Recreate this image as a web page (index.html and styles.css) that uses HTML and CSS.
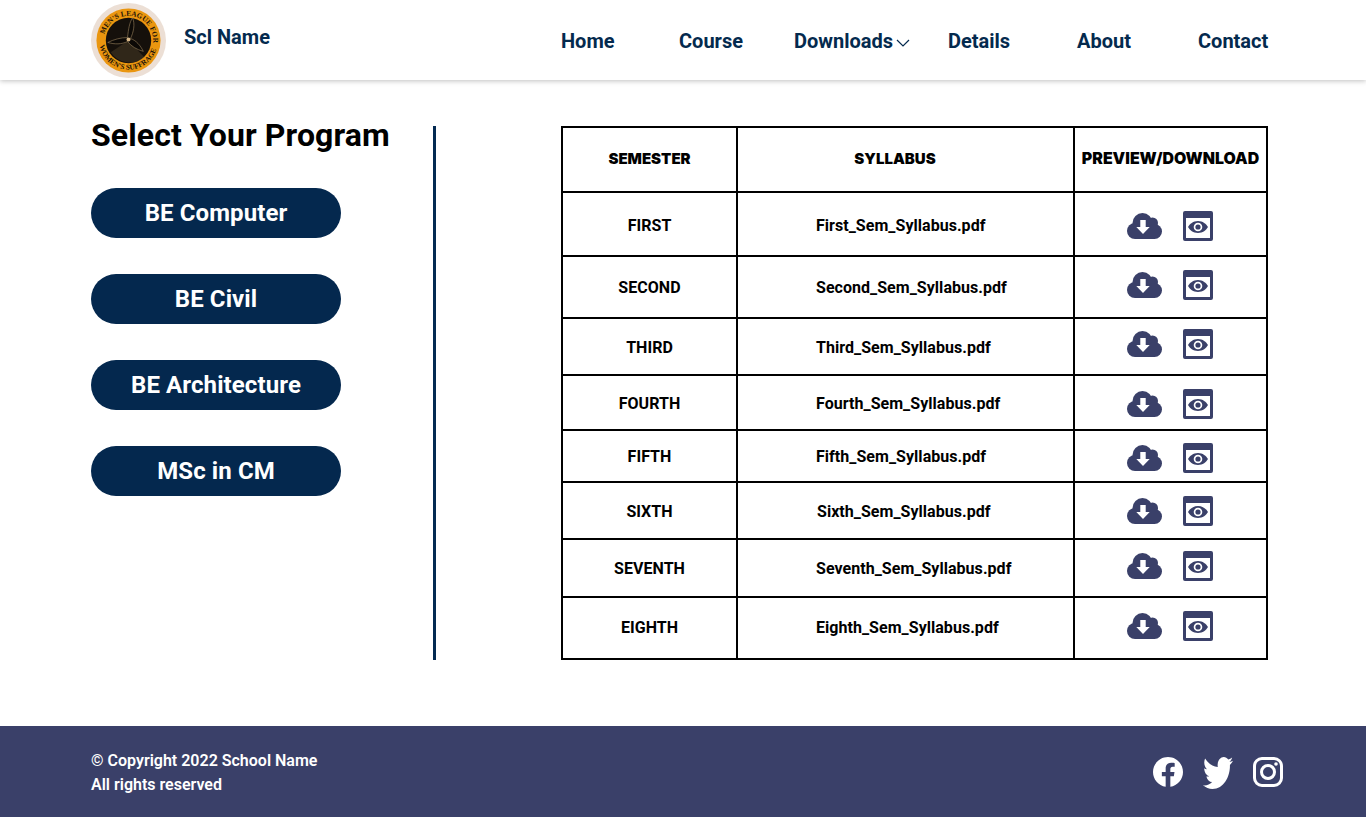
FILE: index.html
```html
<!DOCTYPE html>
<html lang="en">
<head>
    <meta charset="UTF-8">
    <meta name="viewport" content="width=device-width, initial-scale=1.0">
    <title>Scl Name - Syllabus</title>
    <link rel="stylesheet" href="styles.css">
</head>
<body>
    <svg class="sprites" width="0" height="0">
        <symbol id="cloud" viewBox="0 0 35 26">
            <circle cx="8" cy="18" r="8"/>
            <circle cx="15.500" cy="10" r="10"/>
            <circle cx="25.500" cy="10" r="5.500"/>
            <circle cx="27.500" cy="18.500" r="7.500"/>
            <rect x="8" y="14" width="20" height="12"/>
            <path class="arrow" d="M13.300 7h5.400v7h4L16 21l-6.700-7h4z"/>
        </symbol>
        <symbol id="preview" viewBox="0 0 30 30">
            <path fill-rule="evenodd" d="M2 0h26a2 2 0 0 1 2 2v26a2 2 0 0 1-2 2H2a2 2 0 0 1-2-2V2a2 2 0 0 1 2-2zM3 7v20h24V7z"/>
            <path fill-rule="evenodd" d="M15 10c4.800 0 8.300 3 10 6-1.700 3-5.200 6-10 6S6.700 19 5 16c1.700-3 5.200-6 10-6zm0 1.700a4.300 4.300 0 1 0 0 8.600 4.300 4.300 0 0 0 0-8.600z"/>
            <circle cx="15" cy="16" r="2.600"/>
        </symbol>
    </svg>

    <header class="topbar">
        <div class="brand">
            <svg class="logo" viewBox="0 0 76 76">
                <defs>
                    <path id="ringTop" d="M13 38a25 25 0 0 1 50 0"/>
                    <path id="ringBottom" d="M8.500 38a29.500 29.500 0 0 0 59 0"/>
                </defs>
                <circle cx="38" cy="38" r="38" fill="#ecdfd5"/>
                <circle cx="38" cy="38" r="32.500" fill="#ea960f"/>
                <circle cx="38" cy="38" r="23" fill="#15100b"/>
                <path d="M38 38L54 55A23 23 0 0 1 20 50z" fill="#5a4a30" opacity=".4"/>
                <g transform="rotate(10 38 38)">
                    <text class="logo-text"><textPath href="#ringTop" startOffset="50%" text-anchor="middle">MEN'S LEAGUE FOR</textPath></text>
                </g>
                <g transform="rotate(4 38 38)">
                    <text class="logo-text"><textPath href="#ringBottom" startOffset="50%" text-anchor="middle">WOMEN'S SUFFRAGE</textPath></text>
                </g>
                <path d="M37 35C38 26 39 20 42 15C45 21 43 30 40 36C46 38 50 43 53 49C46 47 41 44 37 39C31 42 24 42 17 40C23 37 30 35 37 35z" fill="#0c0906" stroke="#9c8460" stroke-width=".6"/>
                <circle cx="38" cy="37" r="2" fill="#d8b888"/>
            </svg>
            <span class="brand-name">Scl Name</span>
        </div>
        <nav class="menu">
            <a>Home</a>
            <a>Course</a>
            <a class="has-sub">Downloads
                <svg class="chevron" viewBox="0 0 14 8"><path d="M1 1l6 6 6-6"/></svg>
            </a>
            <a>Details</a>
            <a>About</a>
            <a>Contact</a>
        </nav>
    </header>

    <main class="content">
        <section class="programs">
            <h1>Select Your Program</h1>
            <a class="program-btn">BE Computer</a>
            <a class="program-btn">BE Civil</a>
            <a class="program-btn">BE Architecture</a>
            <a class="program-btn">MSc in CM</a>
        </section>
        <div class="divider"></div>
        <table class="syllabus">
            <thead>
                <tr>
                    <th>SEMESTER</th>
                    <th class="file-head">SYLLABUS</th>
                    <th class="action-head">PREVIEW/DOWNLOAD</th>
                </tr>
            </thead>
            <tbody>
                <tr class="r1">
                    <td>FIRST</td>
                    <td class="file">First_Sem_Syllabus.pdf</td>
                    <td><div class="actions"><svg class="ic-cloud"><use href="#cloud"/></svg><svg class="ic-eye"><use href="#preview"/></svg></div></td>
                </tr>
                <tr class="r2">
                    <td>SECOND</td>
                    <td class="file">Second_Sem_Syllabus.pdf</td>
                    <td><div class="actions"><svg class="ic-cloud"><use href="#cloud"/></svg><svg class="ic-eye"><use href="#preview"/></svg></div></td>
                </tr>
                <tr class="r3">
                    <td>THIRD</td>
                    <td class="file">Third_Sem_Syllabus.pdf</td>
                    <td><div class="actions"><svg class="ic-cloud"><use href="#cloud"/></svg><svg class="ic-eye"><use href="#preview"/></svg></div></td>
                </tr>
                <tr class="r4">
                    <td>FOURTH</td>
                    <td class="file">Fourth_Sem_Syllabus.pdf</td>
                    <td><div class="actions"><svg class="ic-cloud"><use href="#cloud"/></svg><svg class="ic-eye"><use href="#preview"/></svg></div></td>
                </tr>
                <tr class="r5">
                    <td>FIFTH</td>
                    <td class="file">Fifth_Sem_Syllabus.pdf</td>
                    <td><div class="actions"><svg class="ic-cloud"><use href="#cloud"/></svg><svg class="ic-eye"><use href="#preview"/></svg></div></td>
                </tr>
                <tr class="r6">
                    <td>SIXTH</td>
                    <td class="file sixth">Sixth_Sem_Syllabus.pdf</td>
                    <td><div class="actions"><svg class="ic-cloud"><use href="#cloud"/></svg><svg class="ic-eye"><use href="#preview"/></svg></div></td>
                </tr>
                <tr class="r7">
                    <td>SEVENTH</td>
                    <td class="file">Seventh_Sem_Syllabus.pdf</td>
                    <td><div class="actions"><svg class="ic-cloud"><use href="#cloud"/></svg><svg class="ic-eye"><use href="#preview"/></svg></div></td>
                </tr>
                <tr class="r8">
                    <td>EIGHTH</td>
                    <td class="file">Eighth_Sem_Syllabus.pdf</td>
                    <td><div class="actions"><svg class="ic-cloud"><use href="#cloud"/></svg><svg class="ic-eye"><use href="#preview"/></svg></div></td>
                </tr>
            </tbody>
        </table>
    </main>

    <footer class="footer">
        <p class="copy">© Copyright 2022 School Name<br>All rights reserved</p>
        <div class="social">
            <svg viewBox="8 8 496 496"><path d="M504 256C504 119 393 8 256 8S8 119 8 256c0 123.780 90.690 226.380 209.250 245V327.690h-63V256h63v-54.640c0-62.150 37-96.480 93.670-96.480 27.140 0 55.520 4.840 55.520 4.840v61h-31.280c-30.800 0-40.410 19.120-40.410 38.730V256h68.780l-11 71.690h-57.780V501C413.310 482.380 504 379.780 504 256z"/></svg>
            <svg class="bird" viewBox="0 48 512 416" preserveAspectRatio="none"><path d="M459.370 151.716c.325 4.548.325 9.097.325 13.645 0 138.720-105.583 298.558-298.558 298.558-59.452 0-114.680-17.219-161.137-47.106 8.447.974 16.568 1.299 25.340 1.299 49.055 0 94.213-16.568 130.274-44.832-46.132-.975-84.792-31.188-98.112-72.772 6.498.974 12.995 1.624 19.818 1.624 9.421 0 18.843-1.300 27.614-3.573-48.081-9.747-84.143-51.980-84.143-102.985v-1.299c13.969 7.797 30.214 12.670 47.431 13.319-28.264-18.843-46.781-51.005-46.781-87.391 0-19.492 5.197-37.360 14.294-52.954 51.655 63.675 129.300 105.258 216.365 109.807-1.624-7.797-2.599-15.918-2.599-24.040 0-57.828 46.782-104.934 104.934-104.934 30.213 0 57.502 12.670 76.670 33.137 23.715-4.548 46.456-13.320 66.599-25.340-7.798 24.366-24.366 44.833-46.132 57.827 21.117-2.273 41.584-8.122 60.426-16.243-14.292 20.791-32.161 39.308-52.628 54.253z"/></svg>
            <svg class="insta" viewBox="0 0 30 30"><rect x="1.500" y="1.500" width="27" height="27" rx="7.500"/><circle cx="15" cy="15" r="6.500"/><circle class="dot" cx="23" cy="7" r="1.800"/></svg>
        </div>
    </footer>
</body>
</html>
```

FILE: styles.css
```css
* {
    box-sizing: border-box;
}

body {
    margin: 0;
    font-family: Roboto, "Liberation Sans", sans-serif;
    background-color: #ffffff;
    color: #000000;
}

.sprites {
    position: absolute;
}

/* Top bar */
.topbar {
    height: 80px;
    padding: 3px 98px 0 91px;
    display: flex;
    justify-content: space-between;
    background-color: #ffffff;
    box-shadow: 0 1px 5px rgba(0,0,0,0.25);
}

.brand {
    display: flex;
    align-items: flex-start;
    gap: 18px;
}

.logo {
    width: 75px;
    height: 75px;
}

.logo-text {
    font-family: "Liberation Serif", serif;
    font-size: 7.400px;
    font-weight: 700;
    fill: #1a1208;
}

.brand-name {
    margin-top: 22px;
    font-size: 20px;
    line-height: 24px;
    font-weight: 700;
    color: #042a4e;
}

.menu {
    display: grid;
    grid-template-columns: 118px 115px 154px 129px 121px 70px;
    align-items: start;
    padding-top: 26px;
    font-size: 20px;
    line-height: 24px;
    font-weight: 700;
    color: #042a4e;
}

.has-sub {
    display: flex;
    align-items: center;
    gap: 3px;
}

.chevron {
    width: 14px;
    height: 8px;
    margin-top: 3px;
    fill: none;
    stroke: #042a4e;
    stroke-width: 1.200;
}

/* Main area */
.content {
    height: 646px;
    padding: 31px 98px 0 91px;
    display: flex;
    align-items: flex-start;
}

.programs {
    width: 342px;
    flex-shrink: 0;
}

.programs h1 {
    margin: 0 0 29px;
    font-size: 32px;
    line-height: 48px;
    font-weight: 700;
    letter-spacing: 0.1px;
}

.program-btn {
    display: block;
    width: 250px;
    height: 50px;
    margin-bottom: 36px;
    border-radius: 25px;
    background-color: #04284e;
    color: #ffffff;
    font-size: 24px;
    line-height: 50px;
    font-weight: 700;
    letter-spacing: 0.1px;
    text-align: center;
}

.divider {
    width: 3px;
    height: 534px;
    margin-top: 15px;
    margin-right: 125px;
    flex-shrink: 0;
    background-color: #042a52;
}

.syllabus {
    width: 707px;
    height: 534px;
    margin-top: 15px;
    border-collapse: collapse;
    table-layout: fixed;
    flex-shrink: 0;
}

.syllabus th, .syllabus td {
    border: 2px solid #000000;
    padding: 0;
    text-align: center;
    vertical-align: middle;
}

.syllabus th:nth-child(1) {
    width: 175px;
}

.syllabus th:nth-child(2) {
    width: 337px;
}

.syllabus th {
    height: 65px;
    padding-bottom: 2px;
    font-family: Inter, sans-serif;
    font-size: 15px;
    font-weight: 900;
}

.syllabus th.file-head {
    padding-right: 21px;
}

.syllabus th.action-head {
    font-size: 15.900px;
}

.syllabus td {
    font-size: 16px;
    font-weight: 700;
    letter-spacing: 0.04px;
}

.syllabus td.file {
    padding-left: 78px;
    text-align: left;
}

.syllabus td.sixth {
    padding-left: 79px;
}

.r1 { height: 64px; }
.r2 { height: 62px; }
.r3 { height: 57px; }
.r4 { height: 55px; }
.r5 { height: 52px; }
.r6 { height: 57px; }
.r7 { height: 58px; }
.r8 { height: 62px; }

/* the text does not sit quite centred in every row */
.r1 td:not(:last-child),
.r3 td:not(:last-child),
.r4 td:not(:last-child),
.r6 td:not(:last-child) {
    padding-top: 2px;
}

.r8 td:not(:last-child) {
    padding-bottom: 2px;
}

.actions {
    display: flex;
    justify-content: center;
    align-items: flex-start;
    gap: 21px;
    padding-right: 1px;
}

.r1 .actions { margin-top: 4px; }
.r2 .actions { margin-bottom: 4px; }
.r3 .actions { margin-bottom: 6px; }
.r4 .actions { margin-top: 2px; }
.r5 .actions { margin-top: 4px; }
.r7 .actions { margin-bottom: 4px; }
.r8 .actions { margin-bottom: 4px; }

.ic-cloud {
    width: 35px;
    height: 26px;
    margin-top: 2px;
    fill: #3a4069;
}

.arrow {
    fill: #ffffff;
}

.ic-eye {
    width: 30px;
    height: 30px;
    fill: #3a4069;
}

/* Footer */
.footer {
    height: 91px;
    padding: 23px 83px 0 91px;
    display: flex;
    justify-content: space-between;
    align-items: flex-start;
    background-color: #3a4069;
    color: #ffffff;
}

.copy {
    margin: 0;
    font-size: 16px;
    line-height: 24px;
    font-weight: 600;
}

.social {
    display: flex;
    align-items: flex-start;
    gap: 20px;
    margin-top: 8px;
}

.social svg {
    width: 30px;
    height: 30px;
    fill: #ffffff;
}

.social .bird {
    height: 32px;
}

.social .insta {
    fill: none;
    stroke: #ffffff;
    stroke-width: 3;
}

.social .insta .dot {
    fill: #ffffff;
    stroke: none;
}
```
